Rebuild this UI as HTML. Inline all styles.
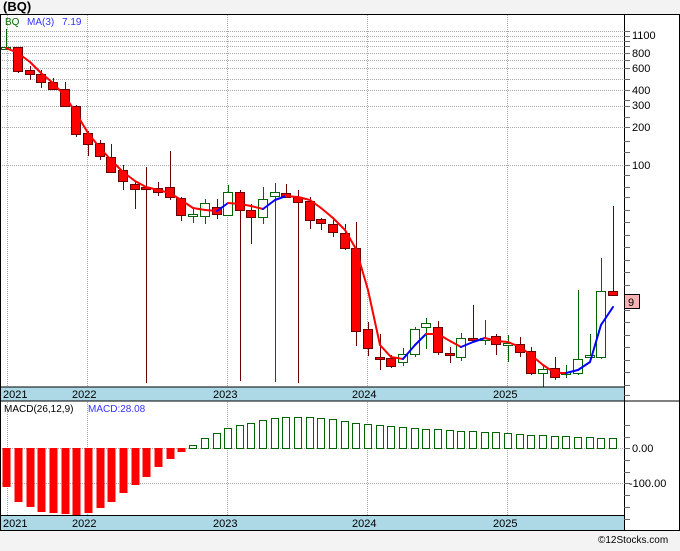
<!DOCTYPE html>
<html><head><meta charset="utf-8">
<style>
html,body{margin:0;padding:0;background:#f3f3f3;}
body{width:680px;height:546px;overflow:hidden;font-family:"Liberation Sans",sans-serif;}
svg text{font-family:"Liberation Sans","DejaVu Sans",sans-serif;}
</style></head>
<body>
<svg id="s" width="680" height="546" viewBox="0 0 680 546" xmlns="http://www.w3.org/2000/svg">
<rect x="0" y="0" width="680" height="546" fill="#f3f3f3"/>
<rect x="0" y="14" width="680" height="516" fill="#fff"/>
<g id="grid" stroke="#aaa" stroke-width="1" stroke-dasharray="1,1"></g>
<g id="cand"></g>
<g id="ma" fill="none" stroke-width="2"></g>
<g id="macd"></g>
<rect x="0" y="387" width="624" height="14" fill="#add8e6"/>
<rect x="0" y="516" width="624" height="14" fill="#add8e6"/>
<line x1="0" y1="387" x2="624" y2="387" stroke="#000"/>
<line x1="0" y1="401" x2="680" y2="401" stroke="#000"/>
<line x1="0" y1="515.5" x2="624" y2="515.5" stroke="#000"/>
<line x1="0" y1="14.5" x2="680" y2="14.5" stroke="#000"/>
<line x1="0" y1="530.5" x2="680" y2="530.5" stroke="#000"/>
<line x1="624.5" y1="14" x2="624.5" y2="530" stroke="#000"/>
<line x1="679.5" y1="14" x2="679.5" y2="530" stroke="#000"/>
<line x1="0.5" y1="14" x2="0.5" y2="530" stroke="#000"/>
<g id="ticks" stroke="#666"></g>
<g font-size="11" fill="#000">
<text x="3" y="398">2021</text><text x="72" y="398">2022</text><text x="213" y="398">2023</text><text x="352" y="398">2024</text><text x="493" y="398">2025</text>
<text x="3" y="527">2021</text><text x="72" y="527">2022</text><text x="213" y="527">2023</text><text x="352" y="527">2024</text><text x="493" y="527">2025</text>
</g>
<g font-size="11" fill="#000">
<text x="632" y="39">1100</text><text x="632" y="57">800</text><text x="632" y="72">600</text><text x="632" y="94">400</text><text x="632" y="109">300</text><text x="632" y="131">200</text><text x="632" y="169">100</text>
<text x="632" y="452">0.00</text><text x="629" y="487">-100.00</text>
</g>
<rect x="624.5" y="294.5" width="15" height="14" fill="#f7b3b3" stroke="#000"/>
<text x="628" y="306" font-size="11">9</text>
<text x="3" y="11" font-size="13" font-weight="bold">(BQ)</text>
<text x="5" y="25" font-size="10" fill="#006400">BQ</text>
<text x="27" y="25" font-size="10" fill="#3333ff">MA(3)</text>
<text x="62" y="25" font-size="10" fill="#3333ff">7.19</text>
<text x="4" y="412" font-size="10" fill="#000">MACD(26,12,9)</text>
<text x="88" y="412" font-size="10" fill="#3333ff">MACD:28.08</text>
<text x="598" y="543" font-size="10" fill="#000">©12Stocks.com</text>
</svg>
<script>
var NS="http://www.w3.org/2000/svg";
function el(p,t,a){var e=document.createElementNS(NS,t);for(var k in a)e.setAttribute(k,a[k]);document.getElementById(p).appendChild(e);return e;}
[31,36,41,46,53,60,68,79,90,106,127,165].forEach(function(y){el('grid','line',{x1:0,x2:624,y1:y+.5,y2:y+.5});});
[7,87,227,367,507].forEach(function(x){el('grid','line',{x1:x+.5,x2:x+.5,y1:15,y2:387});el('grid','line',{x1:x+.5,x2:x+.5,y1:402,y2:515});});
el('grid','line',{x1:0,x2:624,y1:483.5,y2:483.5});
el('grid','line',{x1:0,x2:624,y1:448.5,y2:448.5});
[31,36,41,46,53,60,68,79,90,100,106,117,127,141,152,165,175,187,197,210,222,235,247,260,272,285,297,310,322,335,347,360,372,385,395].forEach(function(y){el('ticks','line',{x1:624,x2:630,y1:y+.5,y2:y+.5});});
[425,437,448,460,472,483,495,507,519].forEach(function(y){el('ticks','line',{x1:624,x2:630,y1:y+.5,y2:y+.5});});
var C=[
[6,47,49,29,50,'g'],[18,47,71,47,73,'r'],[30,70,74,66,80,'r'],[41,74,82,70,88,'r'],[53,82,89,78,90,'r'],
[65,89,106,82,106,'r'],[76,106,134,105,137,'r'],[88,133,144,131,156,'r'],[100,143,156,140,160,'r'],[111,157,172,144,173,'r'],
[123,170,181,165,190,'r'],[135,184,189,182,209,'r'],[146,187,189,167,383,'r'],[158,188,192,182,196,'r'],[170,187,197,151,200,'r'],
[181,198,215,197,221,'r'],[193,214,216,209,223,'g'],[205,203,216,199,224,'g'],[217,207,214,199,219,'r'],[228,192,215,185,215,'g'],
[240,192,210,190,381,'r'],[251,210,217,204,244,'r'],[263,199,217,187,224,'g'],[275,192,196,183,382,'g'],[286,193,197,184,197,'r'],
[298,197,202,190,383,'r'],[310,201,220,197,229,'r'],[321,219,223,218,230,'r'],[333,224,232,220,237,'r'],[345,233,248,224,250,'r'],
[356,248,331,222,346,'r'],[368,329,348,322,356,'r'],[380,357,359,334,370,'r'],[391,358,366,355,368,'r'],[403,354,362,348,366,'g'],
[415,329,354,327,357,'g'],[426,323,327,318,349,'g'],[438,327,352,321,355,'r'],[450,353,355,347,363,'r'],[461,338,357,333,361,'g'],
[473,338,340,305,341,'r'],[485,338,339,320,345,'g'],[496,336,344,334,355,'r'],[508,343,345,335,362,'g'],[520,344,352,337,357,'r'],
[531,351,373,347,375,'r'],[543,369,373,366,387,'g'],[555,368,377,357,380,'r'],[566,372,374,365,378,'g'],[578,359,373,290,375,'g'],
[590,355,357,334,359,'g'],[601,291,357,258,359,'g'],[613,291,295,206,296,'r']];
C.forEach(function(c){
 var col=c[5]=='r'?'#6b0000':'#006400';
 el('cand','line',{x1:c[0]+.5,x2:c[0]+.5,y1:c[3],y2:c[4],stroke:col});
 var h=Math.max(c[2]-c[1],2);
 if(c[5]=='r')el('cand','rect',{x:c[0]-4.5,y:c[1]+.5,width:9,height:h,fill:'#ff0000',stroke:'#6b0000'});
 else el('cand','rect',{x:c[0]-4.5,y:c[1]+.5,width:9,height:h,fill:'#fff',stroke:'#006400'});
});
var M=[[6,48],[18,53],[30,62],[41,73],[53,83],[65,96],[76,113],[88,133],[100,148],[111,160],[123,172],[135,181],[146,187],[158,190],[170,193],[181,200],[193,208],[205,210],[217,211],[228,203],[240,204],[251,206],[263,209],[275,200],[286,196],[298,197],[310,200],[321,208],[333,218],[345,230],[356,249],[368,290],[380,345],[391,357],[403,359],[415,345],[426,334],[438,334],[450,341],[461,347],[473,342],[485,338],[496,341],[508,342],[520,347],[531,355],[543,365],[555,373],[566,373],[578,370],[590,362],[601,325],[613,307]];
for(var i=1;i<M.length;i++){
 var col=M[i][1]<M[i-1][1]?'#0000ff':'#ff0000';
 el('ma','line',{x1:M[i-1][0],y1:M[i-1][1],x2:M[i][0],y2:M[i][1],stroke:col,'stroke-linecap':'round'});
}
var R=[487,502,507,512,513,514,515,513,508,502,493,485,477,467,459,452];
var G=[445,438,433,428,425,423,420,418,417,417,417,418,419,421,423,424,425,426,427,428,429,429,430,431,431,432,432,433,434,435,435,436,436,437,437,438,438];
var xs=C.map(function(c){return c[0];});
for(var j=0;j<R.length;j++){el('macd','rect',{x:xs[j]-3.5,y:448,width:8,height:R[j]-448,fill:'#ff0000',stroke:'none'});}
for(var k=0;k<G.length;k++){var x=xs[R.length+k];el('macd','rect',{x:x-3.5,y:G[k]+.5,width:7,height:448-G[k],fill:'#fff',stroke:'#006400'});}
</script>
</body></html>
